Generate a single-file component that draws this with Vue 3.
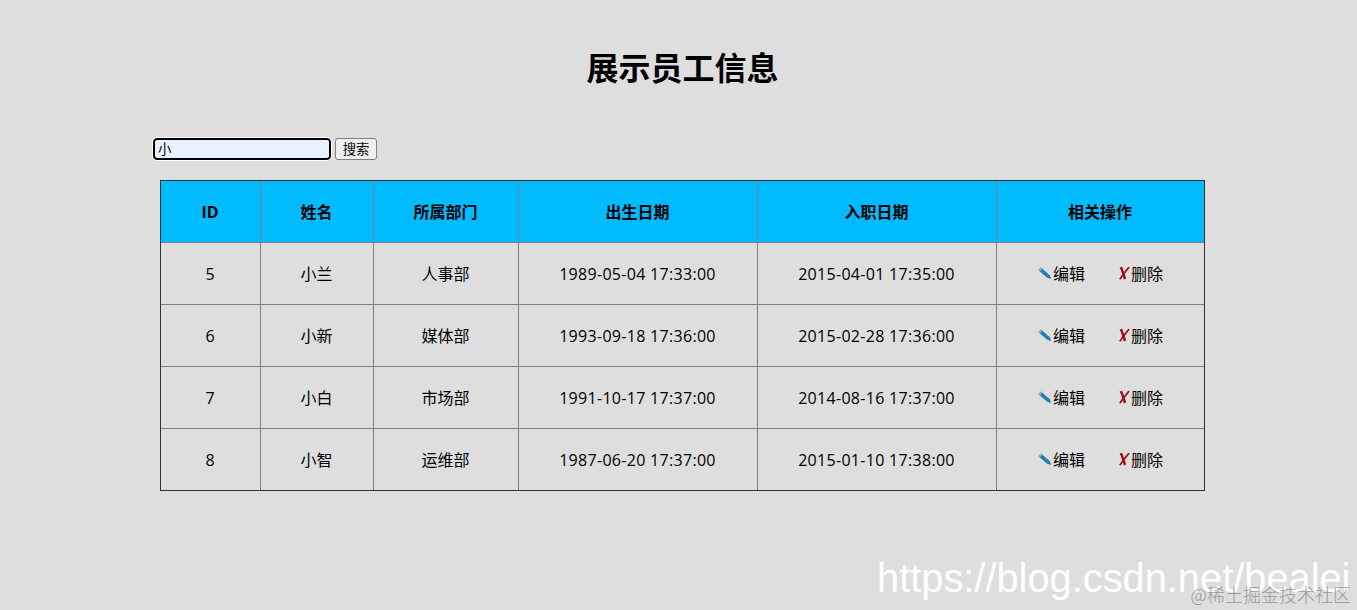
<script setup>
const columns = [
  { key: 'id', label: 'ID', cls: '' },
  { key: 'name', label: '姓名', cls: 'cjk' },
  { key: 'dept', label: '所属部门', cls: 'cjk' },
  { key: 'birth', label: '出生日期', cls: 'cjk' },
  { key: 'hired', label: '入职日期', cls: 'cjk' },
  { key: 'ops', label: '相关操作', cls: 'cjk' },
]
const employees = [
  { id: 5, name: '小兰', dept: '人事部', birth: '1989-05-04 17:33:00', hired: '2015-04-01 17:35:00' },
  { id: 6, name: '小新', dept: '媒体部', birth: '1993-09-18 17:36:00', hired: '2015-02-28 17:36:00' },
  { id: 7, name: '小白', dept: '市场部', birth: '1991-10-17 17:37:00', hired: '2014-08-16 17:37:00' },
  { id: 8, name: '小智', dept: '运维部', birth: '1987-06-20 17:37:00', hired: '2015-01-10 17:38:00' },
]
</script>

<template>
  <div class="page">
    <div class="content">
      <h1 class="title">展示员工信息</h1>
      <form class="search" @submit.prevent>
        <input class="search-input" type="text" value="小" />
        <button class="search-btn" type="submit">搜索</button>
      </form>
      <table class="staff">
        <colgroup>
          <col v-for="c in columns" :key="c.key" :class="'col-' + c.key" />
        </colgroup>
        <thead>
          <tr>
            <th v-for="c in columns" :key="c.key" :class="c.cls">{{ c.label }}</th>
          </tr>
        </thead>
        <tbody>
          <tr v-for="e in employees" :key="e.id">
            <td>{{ e.id }}</td>
            <td class="cjk">{{ e.name }}</td>
            <td class="cjk">{{ e.dept }}</td>
            <td class="date">{{ e.birth }}</td>
            <td class="date">{{ e.hired }}</td>
            <td class="cjk">
              <div class="ops">
                <a class="op">
                  <svg class="icon icon-edit" viewBox="0 0 13 12" width="13" height="12">
                    <path d="M3 .6 L12 8.4 L12.6 11.6 L9.2 10.8 L.4 3.2 Z" fill="#1f7fae" />
                    <path d="M3 .6 L.4 3.2 L1.8 4.4 L4.4 1.8 Z" fill="#7fb4cf" />
                    <path d="M12.6 11.6 L10.9 11.2 L12.2 9.9 Z" fill="#123" />
                  </svg>编辑
                </a>
                <a class="op">
                  <svg class="icon icon-del" viewBox="0 0 12 14" width="12" height="14">
                    <path d="M1.6 1.4 L4.2 .8 C5.4 4.4 7 8.6 8.2 12.6 L5.8 13.6 C5 9.6 3.4 5 1.6 1.4 Z" fill="#a00d14" />
                    <path d="M10.2 .8 L11.8 1.6 C8.6 5.6 5.4 9.8 2.8 13.6 L1 13 C3.8 8.8 7 4.6 10.2 .8 Z" fill="#a00d14" />
                  </svg>删除
                </a>
              </div>
            </td>
          </tr>
        </tbody>
      </table>
    </div>
    <div class="mark-csdn">https://blog.csdn.net/bealei</div>
    <div class="mark-juejin">@稀土掘金技术社区</div>
  </div>
</template>

<style>
html, body { margin: 0; background: #dedede; overflow: hidden; }
</style>

<style scoped>
.page {
  position: relative;
  width: 1357px;
  height: 610px;
  overflow: hidden;
  background: #dedede;
  color: #000;
  font-family: "Open Sans", "Noto Sans CJK SC", sans-serif;
}
.content {
  width: 1045px;
  margin-left: 160px;
  padding-top: 45px;
}
.title {
  margin: 0;
  height: 43px;
  line-height: 43px;
  font-size: 32px;
  font-weight: 700;
  text-align: center;
  font-family: "Noto Sans CJK SC", sans-serif;
}
.search {
  display: flex;
  gap: 4px;
  height: 22px;
  margin: 50px 0 20px -7px;
}
.search-input {
  box-sizing: border-box;
  width: 178px;
  height: 22px;
  padding: 0 3px 2px;
  border: 2px solid #000;
  border-radius: 4px;
  outline: 1px solid #fff;
  background: #e8f0fe;
  font: 13.33px "Noto Sans CJK SC", sans-serif;
  color: #000;
}
.search-btn {
  box-sizing: border-box;
  width: 42px;
  height: 22px;
  padding: 0 0 2px;
  border: 1px solid #808080;
  border-radius: 3px;
  background: #efefef;
  font: 13.33px "Noto Sans CJK SC", sans-serif;
  color: #000;
}
.staff {
  table-layout: fixed;
  width: 1045px;
  box-sizing: border-box;
  border-collapse: separate;
  border-spacing: 0;
  border: 1px solid #333;
  font-size: 16px;
}
.col-id { width: 100px; }
.col-name { width: 113px; }
.col-dept { width: 145px; }
.col-birth { width: 239px; }
.col-hired { width: 239px; }
.col-ops { width: 207px; }
th, td {
  box-sizing: border-box;
  height: 62px;
  padding: 0 1px 0 0;
  text-align: center;
  vertical-align: middle;
  border-right: 1px solid #808080;
  border-bottom: 1px solid #808080;
}
th:last-child, td:last-child { border-right: 0; }
tbody tr:last-child td { border-bottom: 0; height: 61px; }
th {
  background: #00bbff;
  font-weight: 700;
}
.cjk { padding-bottom: 2px; }
.date { letter-spacing: 0.3px; }
.ops {
  display: flex;
  justify-content: center;
  gap: 33px;
  padding-left: 1px;
}
.op {
  display: flex;
  align-items: center;
  color: #000;
}
.icon { flex: none; margin-right: 1px; }
.icon-edit { margin-right: 2px; }
.mark-csdn {
  position: absolute;
  left: 877px;
  top: 550px;
  font: 39.8px/56px "Liberation Sans", sans-serif;
  color: #fff;
  white-space: nowrap;
}
.mark-juejin {
  position: absolute;
  right: 6px;
  top: 583px;
  font: 18px/22px "Noto Sans CJK SC", sans-serif;
  font-weight: 300;
  color: #999;
  white-space: nowrap;
}
</style>
